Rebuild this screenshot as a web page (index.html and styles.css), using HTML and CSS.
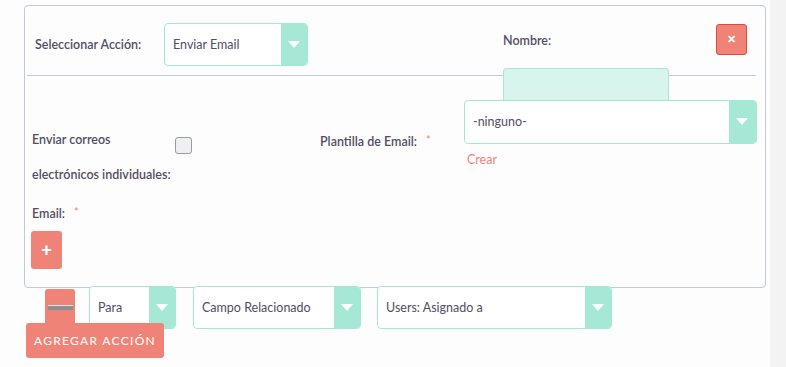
FILE: index.html
```html
<!DOCTYPE html>
<html lang="es">
<head>
    <meta charset="UTF-8">
    <title>Acciones</title>
    <link rel="stylesheet" href="styles.css">
</head>
<body>
    <div class="page">
        <div class="panel">
            <div class="head">
                <span class="label action-label">Seleccionar Acción:</span>
                <div class="select action-select">
                    <span class="select-text">Enviar Email</span>
                    <span class="arrow"></span>
                </div>
                <span class="label name-label">Nombre:</span>
                <button class="close-btn">&#x2715;</button>
            </div>
            <div class="rule"></div>
            <div class="name-box"></div>

            <div class="fields">
                <div class="label multi-label">Enviar correos<br>electrónicos individuales:</div>
                <span class="checkbox"></span>
                <span class="label template-label">Plantilla de Email:<span class="req">*</span></span>
                <div class="template-col">
                    <div class="select template-select">
                        <span class="select-text">-ninguno-</span>
                        <span class="arrow"></span>
                    </div>
                    <a class="create-link">Crear</a>
                </div>
            </div>

            <div class="label email-label">Email:<span class="req">*</span></div>
            <button class="plus-btn">+</button>
        </div>

        <div class="recipient-row">
            <button class="minus-btn"><span class="minus-bar"></span></button>
            <div class="select small-select para">
                <span class="select-text">Para</span>
                <span class="arrow"></span>
            </div>
            <div class="select small-select campo">
                <span class="select-text">Campo Relacionado</span>
                <span class="arrow"></span>
            </div>
            <div class="select small-select users">
                <span class="select-text">Users: Asignado a</span>
                <span class="arrow"></span>
            </div>
        </div>

        <button class="add-action">Agregar acción</button>
    </div>
    <div class="side"></div>
</body>
</html>
```

FILE: styles.css
```css
* {
    margin: 0;
    padding: 0;
    box-sizing: border-box;
}

body {
    font-family: Lato, 'Open Sans', sans-serif;
    display: flex;
    height: 100vh;
    background-color: #fdfdfd;
    color: #534d64;
    overflow: hidden;
}

.page {
    width: 770px;
    flex-shrink: 0;
}

.side {
    flex: 1;
    background-color: #f3f3f3;
}

.panel {
    margin: 5px 0 0 24px;
    width: 742px;
    height: 283px;
    border: 1px solid #c3cad3;
    border-radius: 4px;
}

.label {
    font-size: 12.5px;
    font-weight: 600;
    color: #534d64;
}

.req {
    color: #f08377;
    font-weight: normal;
    font-size: 11px;
    margin-left: 9px;
    vertical-align: 2px;
}

/* header row */
.head {
    display: flex;
    align-items: flex-start;
    height: 69px;
    padding-top: 17px;
}

.action-label {
    width: 139px;
    padding-left: 10px;
    line-height: 43px;
}

.select {
    display: flex;
    height: 43px;
    border: 1px solid #a5e8d6;
    border-radius: 4px;
    background-color: #fff;
    overflow: hidden;
}

.select-text {
    flex: 1;
    font-size: 12.5px;
    line-height: 41px;
    padding-left: 8px;
    color: #534d64;
    white-space: nowrap;
}

.arrow {
    width: 26px;
    background-color: #a5e8d6;
    position: relative;
}

.arrow::after {
    content: '';
    position: absolute;
    left: 7px;
    top: 17px;
    border-left: 6px solid transparent;
    border-right: 6px solid transparent;
    border-top: 7px solid #fff;
}

.action-select {
    width: 144px;
}

.name-label {
    margin-left: 195px;
    line-height: 36px;
}

.close-btn {
    margin-left: 165px;
    margin-top: 1px;
    width: 31px;
    height: 31px;
    border: 1px solid #e04a3e;
    border-radius: 3px;
    background-color: #f08377;
    color: #fff;
    font-size: 11px;
    font-weight: bold;
}

.rule {
    height: 1px;
    margin: 0 9px 0 2px;
    background-color: #c3cad3;
}

.name-box {
    margin: -8px 0 0 478px;
    width: 166px;
    height: 32px;
    background-color: #d8f5ed;
    border: 1px solid #a5e8d6;
    border-bottom: none;
    border-radius: 4px 4px 0 0;
}

/* template row */
.fields {
    display: flex;
    align-items: flex-start;
    height: 100px;
}

.multi-label {
    width: 143px;
    margin-left: 7px;
    margin-top: 22px;
    line-height: 35px;
}

.checkbox {
    width: 17px;
    height: 17px;
    margin-top: 37px;
    border: 1px solid #9a9a9f;
    border-radius: 3px;
    background-color: #eeeff2;
}

.template-label {
    margin-left: 128px;
    margin-top: 22px;
    line-height: 35px;
    width: 144px;
}

.template-col {
    display: flex;
    flex-direction: column;
}

.template-select {
    width: 293px;
    height: 44px;
}

.template-select .select-text {
    line-height: 42px;
}

.template-select .arrow {
    width: 27px;
}

.create-link {
    color: #f08377;
    font-size: 12.5px;
    margin: 8px 0 0 3px;
}

.email-label {
    margin: -6px 0 0 7px;
    line-height: 35px;
}

.plus-btn {
    display: block;
    margin: 0 0 0 6px;
    width: 31px;
    height: 38px;
    border: none;
    border-radius: 3px;
    background-color: #f08377;
    color: #fff;
    font-size: 18px;
    font-weight: bold;
}

/* recipients row */
.recipient-row {
    display: flex;
    align-items: flex-start;
    margin-top: -2px;
    padding-left: 45px;
}

.minus-btn {
    width: 30px;
    height: 34px;
    margin-top: 3px;
    border: none;
    border-radius: 3px 3px 0 0;
    background-color: #f08377;
    display: flex;
    justify-content: center;
    padding-top: 16px;
}

.minus-bar {
    width: 25px;
    height: 5px;
    background-color: #8f8f8f;
    border-top: 1px solid #e4e4e4;
}

.small-select .select-text {
    padding-left: 8px;
}

.para {
    width: 87px;
    margin-left: 14px;
}

.campo {
    width: 168px;
    margin-left: 17px;
}

.users {
    width: 235px;
    margin-left: 16px;
}

.add-action {
    position: relative;
    z-index: 1;
    margin: -8px 0 0 26px;
    width: 138px;
    height: 35px;
    border: none;
    border-radius: 3px;
    background-color: #f08377;
    color: #fff;
    font-family: Lato, sans-serif;
    font-size: 12px;
    letter-spacing: 1.3px;
    text-transform: uppercase;
}
```
